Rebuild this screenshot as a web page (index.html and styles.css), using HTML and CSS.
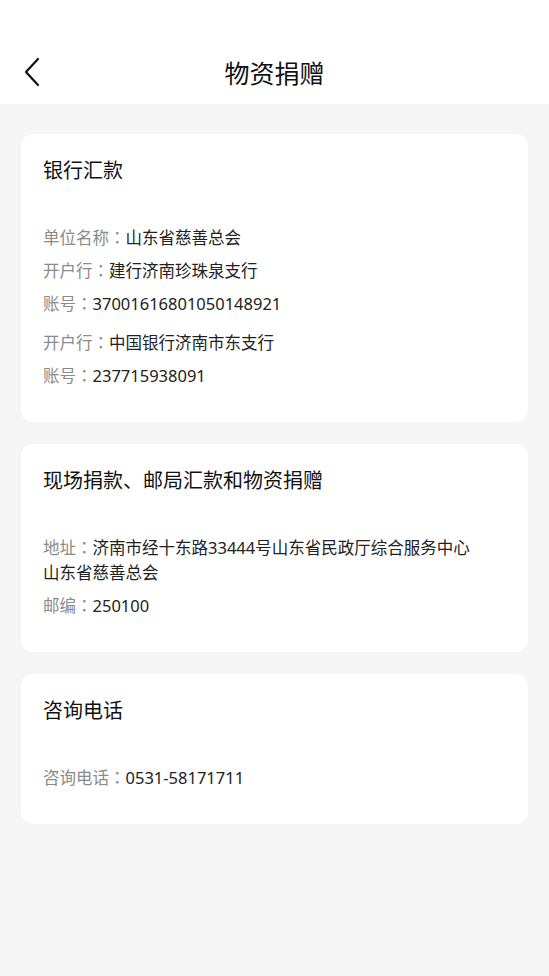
FILE: index.html
```html
<!DOCTYPE html>
<html lang="zh-CN">
<head>
  <meta charset="UTF-8" />
  <meta name="viewport" content="width=device-width, initial-scale=1.0"/>
  <title>物资捐赠</title>
  <link rel="stylesheet" href="styles.css">
</head>
<body>
  <div class="header">
    <div class="nav">
      <a class="back" href="#">
        <svg width="18" height="30" viewBox="0 0 18 30">
          <path d="M15 2 L3 15 L15 28" fill="none" stroke="#111" stroke-width="2.2" stroke-linecap="round" stroke-linejoin="round"/>
        </svg>
      </a>
      <h1>物资捐赠</h1>
    </div>
  </div>

  <div class="content">
    <div class="card">
      <h2>银行汇款</h2>
      <div class="info">
        <p><span class="label">单位名称<span class="colon" lang="zh-TW">：</span></span>山东省慈善总会</p>
        <p><span class="label">开户行<span class="colon" lang="zh-TW">：</span></span>建行济南珍珠泉支行</p>
        <p><span class="label">账号<span class="colon" lang="zh-TW">：</span></span>37001616801050148921</p>
        <p class="group"><span class="label">开户行<span class="colon" lang="zh-TW">：</span></span>中国银行济南市东支行</p>
        <p><span class="label">账号<span class="colon" lang="zh-TW">：</span></span>237715938091</p>
      </div>
    </div>

    <div class="card">
      <h2>现场捐款、邮局汇款和物资捐赠</h2>
      <div class="info">
        <p><span class="label">地址<span class="colon" lang="zh-TW">：</span></span>济南市经十东路33444号山东省民政厅综合服务中心<br>山东省慈善总会</p>
        <p><span class="label">邮编<span class="colon" lang="zh-TW">：</span></span>250100</p>
      </div>
    </div>

    <div class="card">
      <h2>咨询电话</h2>
      <div class="info">
        <p><span class="label">咨询电话<span class="colon" lang="zh-TW">：</span></span>0531-58171711</p>
      </div>
    </div>
  </div>
</body>
</html>
```

FILE: styles.css
```css
body {
  margin: 0;
  font-family: "Noto Sans", "Noto Sans CJK SC", sans-serif;
  background-color: #f5f5f5;
  color: #222;
}

.header {
  background: #fff;
  padding-top: 40px;
}

.nav {
  height: 64px;
  position: relative;
  display: flex;
  align-items: center;
  justify-content: center;
}

.back {
  position: absolute;
  left: 23px;
  top: 17px;
  display: block;
  line-height: 0;
}

h1 {
  margin: 0;
  font-size: 25px;
  font-weight: 400;
  color: #111;
  margin-top: -1px;
}

.content {
  padding: 30px 21px;
  display: flex;
  flex-direction: column;
  gap: 22px;
}

.card {
  background: #fff;
  border-radius: 12px;
  padding: 23px 22px 34px;
}

h2 {
  margin: 0;
  font-size: 20px;
  line-height: 28px;
  font-weight: 400;
  color: #111;
}

.info {
  margin-top: 40px;
}

.info p {
  margin: 8px 0 0;
  font-size: 16.5px;
  line-height: 25px;
}

.info p:first-child {
  margin-top: 0;
}

.info p.group {
  margin-top: 14px;
}

.label {
  color: #8a8a8a;
}

.colon {
  font-family: "Noto Sans CJK TC", sans-serif;
  line-height: 1;
}
```
